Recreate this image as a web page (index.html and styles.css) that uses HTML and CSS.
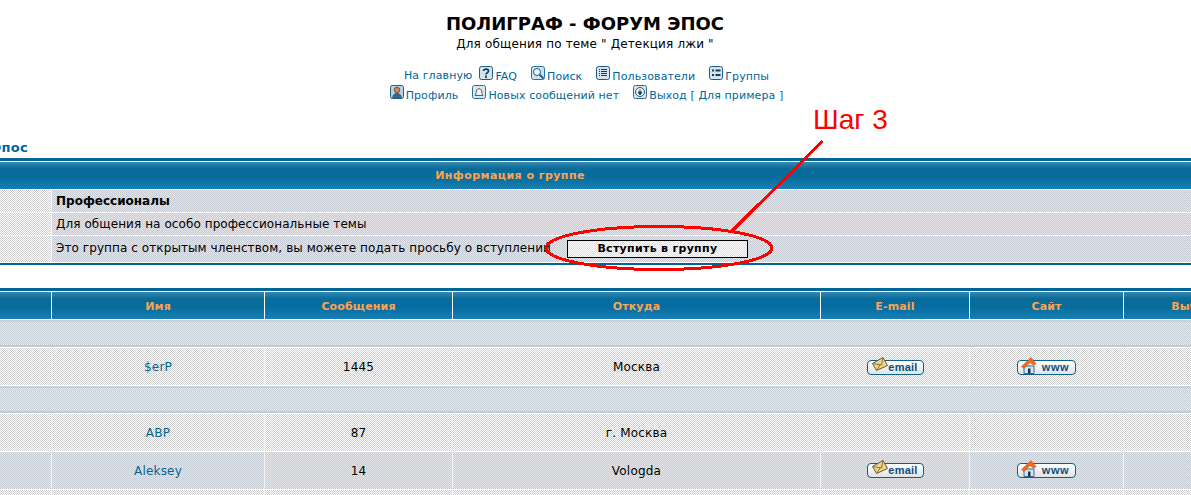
FILE: index.html
```html
<!DOCTYPE html>
<html lang="ru">
<head>
  <meta charset="UTF-8">
  <title>Полиграф - форум ЭПОС</title>
  <link rel="stylesheet" href="styles.css">
</head>
<body>

<div class="header">
  <h1>ПОЛИГРАФ - ФОРУМ ЭПОС</h1>
  <p class="subtitle">Для общения по теме " Детекция лжи "</p>
  <div class="nav">
    <div class="nav-row">
      <a class="home" href="#">На главную</a>
      <a href="#"><svg class="nav-icon" viewBox="0 0 14 14"><rect x=".5" y=".5" width="13" height="13" rx="2" fill="#d5e3ee" stroke="#1d5f86"/><path d="M4.500 5c0-2.500 5-2.500 5 0 0 1.800-2.500 1.600-2.500 3.500M7 9.500V12" fill="none" stroke="#123f5c" stroke-width="1.700"/></svg>FAQ</a>
      <a href="#"><svg class="nav-icon" viewBox="0 0 14 14"><rect x=".5" y=".5" width="13" height="13" rx="2" fill="#cfe2ee" stroke="#2a7199"/><circle cx="6" cy="6" r="3.500" fill="#eef6fb" stroke="#1d5f86"/><path d="M8.500 8.500l4 4" stroke="#1d5f86" stroke-width="1.800"/></svg>Поиск</a>
      <a href="#"><svg class="nav-icon" viewBox="0 0 14 14"><rect x=".5" y=".5" width="13" height="13" rx="2" fill="#d5e3ee" stroke="#1d5f86"/><path d="M3 3.500h1M3 5.500h1M3 7.500h1M3 9.500h1M5 3.500h6M5 5.500h6M5 7.500h6M5 9.500h6" stroke="#123f5c"/></svg>Пользователи</a>
      <a href="#"><svg class="nav-icon" viewBox="0 0 14 14"><rect x=".5" y=".5" width="13" height="13" rx="2" fill="#d5e3ee" stroke="#1d5f86"/><path d="M3 4.500h2M3 9h2M6.500 4.500h5M6.500 9h5" stroke="#123f5c" stroke-width="1.800"/></svg>Группы</a>
    </div>
    <div class="nav-row">
      <a href="#"><svg class="nav-icon" viewBox="0 0 14 14"><rect x=".5" y=".5" width="13" height="13" rx="2" fill="#b9d2e2" stroke="#1d5f86"/><circle cx="7" cy="5" r="2.800" fill="#c98c58" stroke="#6b3d1d" stroke-width=".8"/><path d="M2 13c.5-3.500 2.500-5 5-5s4.500 1.500 5 5z" fill="#35658a"/></svg>Профиль</a>
      <a href="#"><svg class="nav-icon" viewBox="0 0 14 14"><rect x=".5" y=".5" width="13" height="13" rx="2" fill="#dce6ee" stroke="#2a7199"/><path d="M3 10.500c1-1 1-2 1.300-4.500.4-3 5-3 5.400 0 .3 2.500.3 3.500 1.300 4.500z" fill="#eef3f7" stroke="#4f5f6b"/></svg>Новых сообщений нет</a>
      <a href="#"><svg class="nav-icon" viewBox="0 0 14 14"><rect x=".5" y=".5" width="13" height="13" rx="2" fill="#dce6ee" stroke="#2a7199"/><circle cx="7" cy="7" r="4.500" fill="#f2f6f9" stroke="#35556b"/><path d="M7 4.500v2.500M5 7l2 3 2-3z" stroke="#1f4258" fill="#1f4258"/></svg>Выход [ Для примера ]</a>
    </div>
  </div>
</div>

<div class="crumb"><a href="#">Форум Эпос</a></div>

<table class="forum group-info">
  <colgroup>
    <col class="c-num"><col>
  </colgroup>
  <tr>
    <th colspan="2">Информация о группе</th>
  </tr>
  <tr>
    <td class="row1"></td>
    <td class="row3 info-cell"><b>Профессионалы</b></td>
  </tr>
  <tr>
    <td class="row1"></td>
    <td class="row3 info-cell">Для общения на особо профессиональные темы</td>
  </tr>
  <tr>
    <td class="row1"></td>
    <td class="row3 info-cell join-cell">Это группа с открытым членством, вы можете подать просьбу о вступлении <button class="join-btn">Вступить в группу</button></td>
  </tr>
</table>

<table class="forum members">
  <colgroup>
    <col class="c-num"><col class="c-name"><col class="c-posts"><col class="c-from"><col class="c-mail"><col class="c-site"><col class="c-pick">
  </colgroup>
  <tr>
    <th></th>
    <th>Имя</th>
    <th>Сообщения</th>
    <th>Откуда</th>
    <th>E-mail</th>
    <th>Сайт</th>
    <th>Выбрать</th>
  </tr>
  <tr><td class="cat" colspan="7"></td></tr>
  <tr class="row1 member">
    <td></td>
    <td><a href="#">$erP</a></td>
    <td>1445</td>
    <td>Москва</td>
    <td><a class="pill" href="#"><svg class="pill-ico" viewBox="0 0 16 14"><path d="M.5 6.500 11 .5l4.500 8-11 5z" fill="#ecd690" stroke="#6b5a2a"/><path d="M.5 6.500l9 1.500L11 .5M4.500 13.500 8 8" fill="none" stroke="#8a7433"/></svg><span>email</span></a></td>
    <td><a class="pill pill-www" href="#"><svg class="pill-ico house" viewBox="0 0 16 17"><path d="M3 9h10v7.500H3z" fill="#d3e5f1" stroke="#3b6f95"/><path d="M7 16.500v-5h2.500v5z" fill="#17384f"/><path d="M.5 9.500 10 .5l5 6-2 2-4-3-6 6z" fill="#f26a1b" stroke="#c94a0c" stroke-width=".5"/></svg><span>www</span></a></td>
    <td></td>
  </tr>
  <tr><td class="cat" colspan="7"></td></tr>
  <tr class="row1 member">
    <td></td>
    <td><a href="#">ABP</a></td>
    <td>87</td>
    <td>г. Москва</td>
    <td></td>
    <td></td>
    <td></td>
  </tr>
  <tr class="row2 member">
    <td></td>
    <td><a href="#">Aleksey</a></td>
    <td>14</td>
    <td>Vologda</td>
    <td><a class="pill" href="#"><svg class="pill-ico" viewBox="0 0 16 14"><path d="M.5 6.500 11 .5l4.500 8-11 5z" fill="#ecd690" stroke="#6b5a2a"/><path d="M.5 6.500l9 1.500L11 .5M4.500 13.500 8 8" fill="none" stroke="#8a7433"/></svg><span>email</span></a></td>
    <td><a class="pill pill-www" href="#"><svg class="pill-ico house" viewBox="0 0 16 17"><path d="M3 9h10v7.500H3z" fill="#d3e5f1" stroke="#3b6f95"/><path d="M7 16.500v-5h2.500v5z" fill="#17384f"/><path d="M.5 9.500 10 .5l5 6-2 2-4-3-6 6z" fill="#f26a1b" stroke="#c94a0c" stroke-width=".5"/></svg><span>www</span></a></td>
    <td></td>
  </tr>
  <tr class="row1 member"><td></td><td></td><td></td><td></td><td></td><td></td><td></td></tr>
</table>

<!-- red notes drawn on top of the screenshot -->
<div class="note">Шаг 3</div>
<svg class="marks" viewBox="0 0 1191 495">
  <path d="M822.500 141 732 231" fill="none" stroke="#f00" stroke-width="3"/>
  <ellipse cx="659" cy="248" rx="113" ry="21.500" fill="none" stroke="#f00" stroke-width="3"/>
</svg>

</body>
</html>
```

FILE: styles.css
```css
html, body {
  margin: 0;
  height: 495px;
  overflow: hidden;
  background: #fff;
}

body {
  position: relative;
  font-family: "DejaVu Sans", Verdana, sans-serif;
  font-size: 12px;
  color: #000;
}

a {
  color: #006699;
  text-decoration: none;
}

.header {
  text-align: center;
  width: 1170px;
  padding-top: 12px;
}

h1 {
  margin: 0;
  font-size: 18px;
  line-height: 23px;
  font-weight: bold;
}

.subtitle {
  margin: 2px 0 0;
  font-size: 12px;
  line-height: 15px;
  letter-spacing: .15px;
}

.nav {
  margin-top: 14px;
  padding-left: 3px;
  font-size: 11px;
  letter-spacing: .1px;
}

.nav-row {
  display: flex;
  justify-content: center;
  gap: 14px;
  height: 19px;
  line-height: 19px;
}

.nav-row a {
  display: inline-flex;
  align-items: baseline;
  gap: 2px;
}

.home {
  margin-right: -7px;
}

.nav-icon {
  width: 14px;
  height: 14px;
}

.crumb {
  width: 28px;
  height: 16px;
  margin-top: 36px;
  overflow: hidden;
  display: flex;
  justify-content: flex-end;
  white-space: nowrap;
  font-size: 13px;
  line-height: 16px;
  font-weight: bold;
  letter-spacing: .3px;
}

.forum {
  border-collapse: separate;
  border-spacing: 0;
  table-layout: fixed;
  border-top: 3px solid #006699;
}

.group-info {
  width: 1191px;
  margin-top: 2px;
  border-bottom: 2px solid #006699;
}

/* the real table runs past the left edge, so its title sits left of centre */
.group-info th {
  padding-right: 171px;
  letter-spacing: .45px;
}

.members {
  width: 1274px;
  margin-top: 23px;
}

.members th {
  height: 26px;
  padding-top: 1px;
}

th {
  height: 27px;
  padding: 0;
  border-top: 1px solid #fff;
  border-bottom: 1px solid #fff;
  border-left: 1px solid #fff;
  color: #ffa34f;
  font-size: 11px;
  font-weight: bold;
  letter-spacing: .15px;
  background:
    linear-gradient(rgba(130, 175, 195, .4), rgba(0, 102, 153, 0) 25%, rgba(0, 102, 153, 0) 55%, rgba(40, 150, 210, .45)),
    url("data:image/svg+xml,%3Csvg xmlns='http://www.w3.org/2000/svg' width='2' height='2' shape-rendering='crispEdges'%3E%3Crect width='2' height='2' fill='%23006699'/%3E%3Cpath d='M0 0h1v1H0zM1 1h1v1H1z' fill='%230e72a0'/%3E%3C/svg%3E");
}

th:first-child {
  border-left: 0;
}

td {
  padding: 0;
  text-align: center;
  border-left: 1px solid #f4f4f4;
  border-bottom: 1px solid #fff;
}

td:first-child {
  border-left: 0;
}

.row1 td, td.row1 {
  background: url("data:image/svg+xml,%3Csvg xmlns='http://www.w3.org/2000/svg' width='2' height='2' shape-rendering='crispEdges'%3E%3Crect width='2' height='2' fill='%23fff'/%3E%3Cpath d='M0 0h1v1H0zM1 1h1v1H1z' fill='%23cfcfcf'/%3E%3C/svg%3E");
}

.row2 td {
  background: url("data:image/svg+xml,%3Csvg xmlns='http://www.w3.org/2000/svg' width='2' height='2' shape-rendering='crispEdges'%3E%3Crect width='2' height='2' fill='%23e4e6ea'/%3E%3Cpath d='M0 0h1v1H0zM1 1h1v1H1z' fill='%23c6ccd4'/%3E%3C/svg%3E");
}

td.row3 {
  background: url("data:image/svg+xml,%3Csvg xmlns='http://www.w3.org/2000/svg' width='2' height='2' shape-rendering='crispEdges'%3E%3Crect width='2' height='2' fill='%23e8e8ec'/%3E%3Cpath d='M0 0h1v1H0zM1 1h1v1H1z' fill='%23c4c8d0'/%3E%3C/svg%3E");
}

.info-cell {
  height: 22px;
  padding-left: 4px;
  text-align: left;
  letter-spacing: .08px;
  white-space: nowrap;
}

.info-cell b {
  letter-spacing: 0;
}

.join-cell {
  height: 26px;
}

.join-btn {
  width: 181px;
  height: 18px;
  margin-left: 12px;
  padding: 0;
  border: 1px solid #000;
  font-family: inherit;
  font-size: 11px;
  line-height: 14px;
  font-weight: bold;
  letter-spacing: .3px;
  color: #000;
  background: url("data:image/svg+xml,%3Csvg xmlns='http://www.w3.org/2000/svg' width='2' height='2' shape-rendering='crispEdges'%3E%3Crect width='2' height='2' fill='%23fff'/%3E%3Cpath d='M0 0h1v1H0zM1 1h1v1H1z' fill='%23dcdcdc'/%3E%3C/svg%3E");
}

.c-num { width: 51px; }
.c-name { width: 213px; }
.c-posts { width: 188px; }
.c-from { width: 368px; }
.c-mail { width: 149px; }
.c-site { width: 154px; }
.c-pick { width: 151px; }

.cat {
  height: 27px;
  background:
    linear-gradient(#c2d3dc 0 2px, transparent 2px calc(100% - 2px), #c2ccd4 calc(100% - 2px)),
    url("data:image/svg+xml,%3Csvg xmlns='http://www.w3.org/2000/svg' width='2' height='2' shape-rendering='crispEdges'%3E%3Crect width='2' height='2' fill='%23dfeef2'/%3E%3Cpath d='M0 0h1v1H0zM1 1h1v1H1z' fill='%23c4ccd4'/%3E%3C/svg%3E");
}

.member td {
  height: 37px;
  letter-spacing: .2px;
}

.row1.member td {
  height: 36px;
  padding-top: 1px;
}

.pill {
  position: relative;
  display: inline-flex;
  align-items: center;
  justify-content: flex-end;
  box-sizing: border-box;
  width: 57px;
  height: 15px;
  padding-right: 5px;
  border: 1px solid #0d6087;
  border-radius: 4px;
  background: linear-gradient(#fff, #dfe4e8);
  color: #0d4f78;
  font-family: "Liberation Sans", Arial, sans-serif;
  font-size: 11px;
  font-weight: bold;
  line-height: 13px;
  vertical-align: middle;
}

.pill-www {
  width: 59px;
  padding-right: 6px;
  letter-spacing: .5px;
}

.pill-ico {
  position: absolute;
  left: 4px;
  top: -4px;
  width: 16px;
  height: 14px;
}

.house {
  left: 3px;
  height: 17px;
}

.note {
  position: absolute;
  left: 813px;
  top: 103px;
  font-family: "Liberation Sans", Arial, sans-serif;
  font-size: 28px;
  line-height: 34px;
  color: #f00;
}

.marks {
  position: absolute;
  left: 0;
  top: 0;
  width: 1191px;
  height: 495px;
  shape-rendering: crispEdges;
  pointer-events: none;
}
```
